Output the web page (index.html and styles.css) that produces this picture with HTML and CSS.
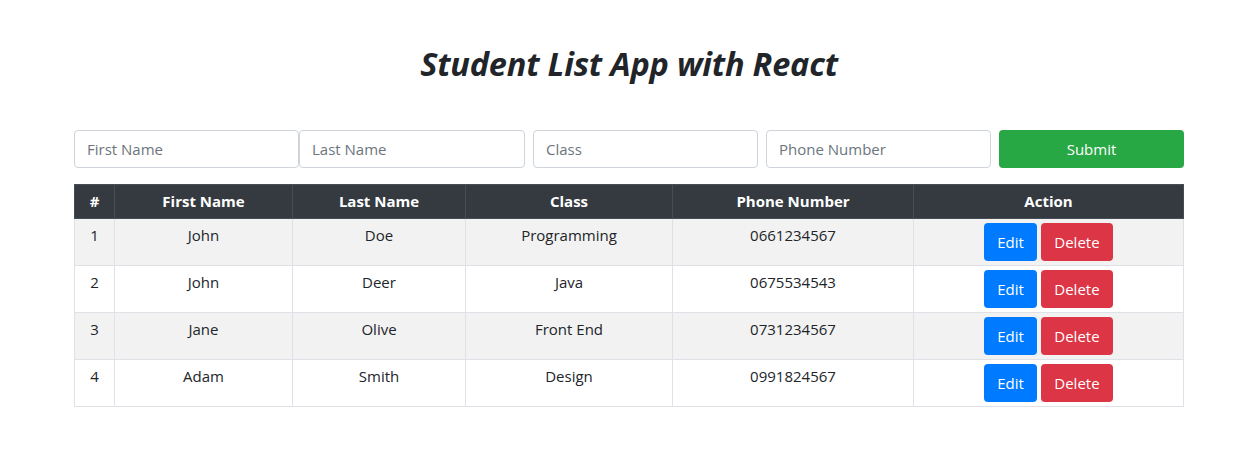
FILE: index.html
```html
<!DOCTYPE html>
<html>
<head>
<meta charset="utf-8">
<link rel="stylesheet" href="styles.css">
</head>
<body>
<div class="container">
  <h1 class="title">Student List App with React</h1>
  <form class="form">
    <input class="field f1" placeholder="First Name">
    <input class="field f2" placeholder="Last Name">
    <input class="field f3" placeholder="Class">
    <input class="field f4" placeholder="Phone Number">
    <button type="button" class="btn btn-green submit">Submit</button>
  </form>
  <table class="table">
    <colgroup>
      <col style="width:40px"><col style="width:178px"><col style="width:173px"><col style="width:207px"><col style="width:241px"><col style="width:270px">
    </colgroup>
    <thead>
      <tr><th>#</th><th>First Name</th><th>Last Name</th><th>Class</th><th>Phone Number</th><th>Action</th></tr>
    </thead>
    <tbody>
      <tr class="odd"><td>1</td><td>John</td><td>Doe</td><td>Programming</td><td>0661234567</td><td><button class="btn btn-blue">Edit</button> <button class="btn btn-red">Delete</button></td></tr>
      <tr><td>2</td><td>John</td><td>Deer</td><td>Java</td><td>0675534543</td><td><button class="btn btn-blue">Edit</button> <button class="btn btn-red">Delete</button></td></tr>
      <tr class="odd"><td>3</td><td>Jane</td><td>Olive</td><td>Front End</td><td>0731234567</td><td><button class="btn btn-blue">Edit</button> <button class="btn btn-red">Delete</button></td></tr>
      <tr><td>4</td><td>Adam</td><td>Smith</td><td>Design</td><td>0991824567</td><td><button class="btn btn-blue">Edit</button> <button class="btn btn-red">Delete</button></td></tr>
    </tbody>
  </table>
</div>
</body>
</html>
```

FILE: styles.css
```css
* { box-sizing: border-box; }
body {
  margin: 0;
  font-family: "Open Sans", "Noto Sans", sans-serif;
  font-size: 15px;
  color: #212529;
  background: #fff;
}
.container {
  width: 1110px;
  margin: 0 0 0 74px;
  padding-top: 43px;
}
.title {
  margin: 0 0 45px;
  text-align: center;
  font-size: 32.5px;
  line-height: 42px;
  font-style: italic;
  font-weight: 700;
  letter-spacing: -0.2px;
  color: #212529;
}
.form {
  display: flex;
  margin: 0 0 16px;
}
.field {
  height: 38px;
  width: 225px;
  padding: 6px 12px;
  border: 1px solid #ced4da;
  border-radius: 4px;
  font-family: inherit;
  font-size: 15px;
  color: #495057;
  background: #fff;
}
.field::placeholder { color: #6c757d; }
.f2 { width: 226px; }
.f3 { margin-left: 8px; }
.f4 { margin-left: 8px; }
.submit { margin-left: 8px; width: 185px; height: 38px; }
.btn {
  border: 0;
  border-radius: 4px;
  color: #fff;
  font-family: inherit;
  font-size: 15px;
  line-height: 24px;
  padding: 7px 12px;
  cursor: pointer;
  vertical-align: middle;
}
.btn-green { background: #28a745; }
.btn-blue { background: #007bff; width: 53px; padding: 7px 0; }
.btn-red { background: #dc3545; width: 72px; padding: 7px 0; }
.table {
  width: 1109px;
  border-collapse: collapse;
  table-layout: fixed;
}
.table th {
  background: #343a40;
  color: #fff;
  font-weight: 700;
  height: 34px;
  padding: 3px 4px 5px;
  border: 1px solid #454d55;
  line-height: 24px;
  text-align: center;
}
.table td {
  height: 47px;
  padding: 4px;
  border: 1px solid #dee2e6;
  text-align: center;
  vertical-align: top;
  line-height: 24px;
}
.table tr.odd td { background: #f2f2f2; }
```
